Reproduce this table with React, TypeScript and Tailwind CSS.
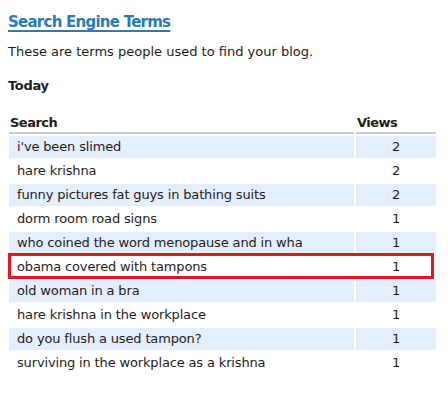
const rows: { term: string; views: number; hot?: boolean }[] = [
  { term: "i've been slimed", views: 2 },
  { term: "hare krishna", views: 2 },
  { term: "funny pictures fat guys in bathing suits", views: 2 },
  { term: "dorm room road signs", views: 1 },
  { term: "who coined the word menopause and in wha", views: 1 },
  { term: "obama covered with tampons", views: 1, hot: true },
  { term: "old woman in a bra", views: 1 },
  { term: "hare krishna in the workplace", views: 1 },
  { term: "do you flush a used tampon?", views: 1 },
  { term: "surviving in the workplace as a krishna", views: 1 },
];

export default function App() {
  return (
    <div className="w-[448px] h-[394px] bg-white text-[#1f1d1b] font-['DejaVu_Sans',Verdana,sans-serif] overflow-hidden">
      <div className="pl-2 pt-[12px]">
        <h2 className="text-[15px] leading-[20px] font-bold tracking-[-0.75px] text-[#2a7ab3] underline decoration-[1.5px] underline-offset-[3px]">
          Search Engine Terms
        </h2>
        <p className="mt-[12px] text-[13px] leading-[16px]">
          These are terms people used to find your blog.
        </p>
        <h3 className="mt-[17px] text-[13px] leading-[18px] font-bold tracking-[-0.3px]">Today</h3>
      </div>

      {/* terms table */}
      <div className="ml-[9px] w-[427px] mt-[19px] flex flex-col gap-[2px] text-[13px] tracking-[-0.15px]">
        <div className="flex gap-[2px] font-bold tracking-[-0.5px]">
          <div className="flex-1 pl-px leading-[18px] border-b-2 border-[#cccccc]">Search</div>
          <div className="w-[80px] pl-px leading-[18px] border-b-2 border-[#cccccc]">Views</div>
        </div>
        {rows.map((r, i) => (
          <div key={i} className="relative flex gap-[2px] h-[22px] leading-[22px]">
            <div className={`flex-1 pl-2 whitespace-nowrap ${i % 2 === 0 ? "bg-[#e5eefc]" : ""}`}>{r.term}</div>
            <div className={`w-[80px] text-center ${i % 2 === 0 ? "bg-[#e5eefc]" : ""}`}>{r.views}</div>
            {r.hot && (
              <div className="absolute -top-[3px] -left-px right-[2px] -bottom-px border-[3px] border-[#e8151b]" />
            )}
          </div>
        ))}
      </div>
    </div>
  );
}
